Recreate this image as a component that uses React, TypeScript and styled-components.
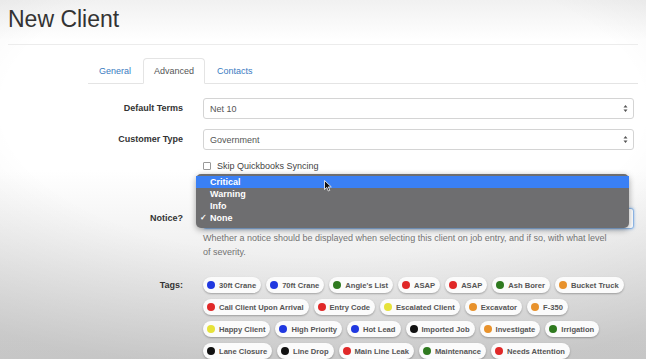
import React from 'react';
import styled, { createGlobalStyle } from 'styled-components';

const GlobalStyle = createGlobalStyle`
  html, body {
    margin: 0;
    padding: 0;
    height: 100%;
    overflow: hidden;
  }
  body {
    font-family: "Liberation Sans", Arial, sans-serif;
    background:
      radial-gradient(ellipse 90% 75% at 50% 30%, rgba(255,255,255,0) 55%, rgba(0,0,0,0.10) 100%),
      linear-gradient(to bottom, #f1f1f1 0px, #ffffff 40px, #ffffff 170px, #dcdcdc 359px);
  }
`;

const Page = styled.div`
  width: 646px;
  height: 359px;
  padding: 0 8px;
  box-sizing: border-box;
`;

const Header = styled.div`
  padding-top: 7px;
  height: 45px;
  box-sizing: border-box;
  border-bottom: 1px solid #ececec;
`;

const Title = styled.h1`
  margin: 0;
  font-size: 23px;
  line-height: 25px;
  font-weight: normal;
  color: #333;
`;

const Body = styled.div`
  padding-left: 80px;
  padding-top: 13px;
`;

const TabBar = styled.div`
  display: flex;
  height: 26px;
  border-bottom: 1px solid #e4e4e4;
  box-sizing: border-box;
`;

const Tab = styled.div<{ $active?: boolean }>`
  display: flex;
  align-items: center;
  padding: 0 10px;
  margin-right: 1px;
  font-size: 9px;
  color: ${p => (p.$active ? '#555' : '#3a7bbf')};
  background: ${p => (p.$active ? '#fff' : 'transparent')};
  border: 1px solid ${p => (p.$active ? '#e4e4e4' : 'transparent')};
  border-bottom-color: ${p => (p.$active ? '#fff' : 'transparent')};
  border-radius: 4px 4px 0 0;
  margin-bottom: -1px;
`;

const Form = styled.div`
  display: grid;
  grid-template-columns: 95px 431px;
  column-gap: 20px;
  padding-top: 14px;
`;

const Label = styled.div<{ $mt?: number }>`
  font-size: 9px;
  font-weight: bold;
  color: #333;
  text-align: right;
  line-height: 21px;
  margin-top: ${p => p.$mt ?? 0}px;
`;

const Control = styled.div<{ $mt?: number }>`
  position: relative;
  margin-top: ${p => p.$mt ?? 0}px;
`;

const SelectBox = styled.div<{ $focus?: boolean }>`
  height: 21px;
  box-sizing: border-box;
  border: 1px solid ${p => (p.$focus ? '#8fb8e8' : '#d4d4d4')};
  box-shadow: ${p => (p.$focus ? '0 0 3px rgba(80,150,230,0.6)' : 'none')};
  border-radius: 3px;
  background: #fff;
  display: flex;
  align-items: center;
  justify-content: space-between;
  padding: 0 5px 0 6px;
  font-size: 9px;
  color: #555;
`;

const Arrows = () => (
  <svg width="5" height="9" viewBox="0 0 5 9">
    <path d="M0.5 3.5 L2.5 1 L4.5 3.5 Z M0.5 5.5 L2.5 8 L4.5 5.5 Z" fill="#555" />
  </svg>
);

const CheckRow = styled.label`
  display: flex;
  align-items: center;
  gap: 6px;
  height: 12px;
  margin-top: 10px;
  font-size: 9px;
  color: #444;
`;

const Box = styled.span`
  width: 6px;
  height: 6px;
  border: 1px solid #999;
  border-radius: 1px;
  background: #fff;
`;

const Menu = styled.div`
  position: absolute;
  left: -7px;
  top: -34px;
  width: 433px;
  height: 54px;
  box-sizing: border-box;
  padding-top: 2px;
  background: #6e6e70;
  border-radius: 5px;
  box-shadow: 0 2px 6px rgba(0,0,0,0.35);
  z-index: 2;
`;

const MenuItem = styled.div<{ $selected?: boolean }>`
  position: relative;
  height: 12px;
  line-height: 12px;
  padding-left: 14px;
  font-size: 9px;
  font-weight: bold;
  color: #fff;
  background: ${p => (p.$selected ? '#3a80f5' : 'transparent')};
`;

const Check = styled.span`
  position: absolute;
  left: 4px;
  top: 0;
  font-size: 8px;
`;

const Cursor = styled.svg`
  position: absolute;
  left: 128px;
  top: 6px;
`;

const Help = styled.div`
  margin-top: 2px;
  font-size: 9px;
  line-height: 14px;
  color: #727272;
  max-width: 412px;
`;

const Tags = styled.div`
  display: flex;
  flex-wrap: wrap;
  gap: 6px 5px;
`;

const Tag = styled.div`
  display: flex;
  align-items: center;
  gap: 4px;
  height: 16px;
  padding: 0 5px 0 4px;
  border-radius: 8px;
  background: #fbfbfb;
  box-shadow: 0 1px 2px rgba(0,0,0,0.28);
  font-size: 7.6px;
  font-weight: bold;
  color: #555;
  white-space: nowrap;
`;

const Dot = styled.span<{ $color: string }>`
  width: 8px;
  height: 8px;
  border-radius: 50%;
  background: ${p => p.$color};
`;

const C = {
  blue: '#2038e0',
  green: '#2f7a1f',
  red: '#e02828',
  orange: '#e8922c',
  yellow: '#e6e23a',
  black: '#111',
};

const tags: [string, string][] = [
  ['30ft Crane', C.blue],
  ['70ft Crane', C.blue],
  ["Angie's List", C.green],
  ['ASAP', C.red],
  ['ASAP', C.red],
  ['Ash Borer', C.green],
  ['Bucket Truck', C.orange],
  ['Call Client Upon Arrival', C.red],
  ['Entry Code', C.red],
  ['Escalated Client', C.yellow],
  ['Excavator', C.orange],
  ['F-350', C.orange],
  ['Happy Client', C.yellow],
  ['High Priority', C.blue],
  ['Hot Lead', C.blue],
  ['Imported Job', C.black],
  ['Investigate', C.orange],
  ['Irrigation', C.green],
  ['Lane Closure', C.black],
  ['Line Drop', C.black],
  ['Main Line Leak', C.red],
  ['Maintenance', C.green],
  ['Needs Attention', C.red],
];

export default function App() {
  return (
    <Page>
      <GlobalStyle />
      <Header>
        <Title>New Client</Title>
      </Header>
      <Body>
        <TabBar>
          <Tab>General</Tab>
          <Tab $active>Advanced</Tab>
          <Tab>Contacts</Tab>
        </TabBar>
        <Form>
          <Label>Default Terms</Label>
          <Control>
            <SelectBox>Net 10<Arrows /></SelectBox>
          </Control>

          <Label $mt={10}>Customer Type</Label>
          <Control $mt={10}>
            <SelectBox>Government<Arrows /></SelectBox>
          </Control>

          <div />
          <Control>
            <CheckRow><Box />Skip Quickbooks Syncing</CheckRow>
          </Control>

          <Label $mt={36}>Notice?</Label>
          <Control $mt={36}>
            <SelectBox $focus>None<Arrows /></SelectBox>
            <Menu>
              <MenuItem $selected>Critical</MenuItem>
              <MenuItem>Warning</MenuItem>
              <MenuItem>Info</MenuItem>
              <MenuItem><Check>✓</Check>None</MenuItem>
              <Cursor width="8" height="12" viewBox="0 0 8 12">
                <path d="M0.5 0.5 L0.5 9.5 L2.8 7.4 L4.3 11 L5.8 10.3 L4.3 6.9 L7.3 6.9 Z" fill="#111" stroke="#fff" strokeWidth="0.8" />
              </Cursor>
            </Menu>
            <Help>
              Whether a notice should be displayed when selecting this client on job entry, and if so, with what level of severity.
            </Help>
          </Control>

          <Label $mt={18} style={{ lineHeight: '16px' }}>Tags:</Label>
          <Control $mt={18}>
            <Tags>
              {tags.map(([name, color], i) => (
                <Tag key={i}><Dot $color={color} />{name}</Tag>
              ))}
            </Tags>
          </Control>
        </Form>
      </Body>
    </Page>
  );
}
